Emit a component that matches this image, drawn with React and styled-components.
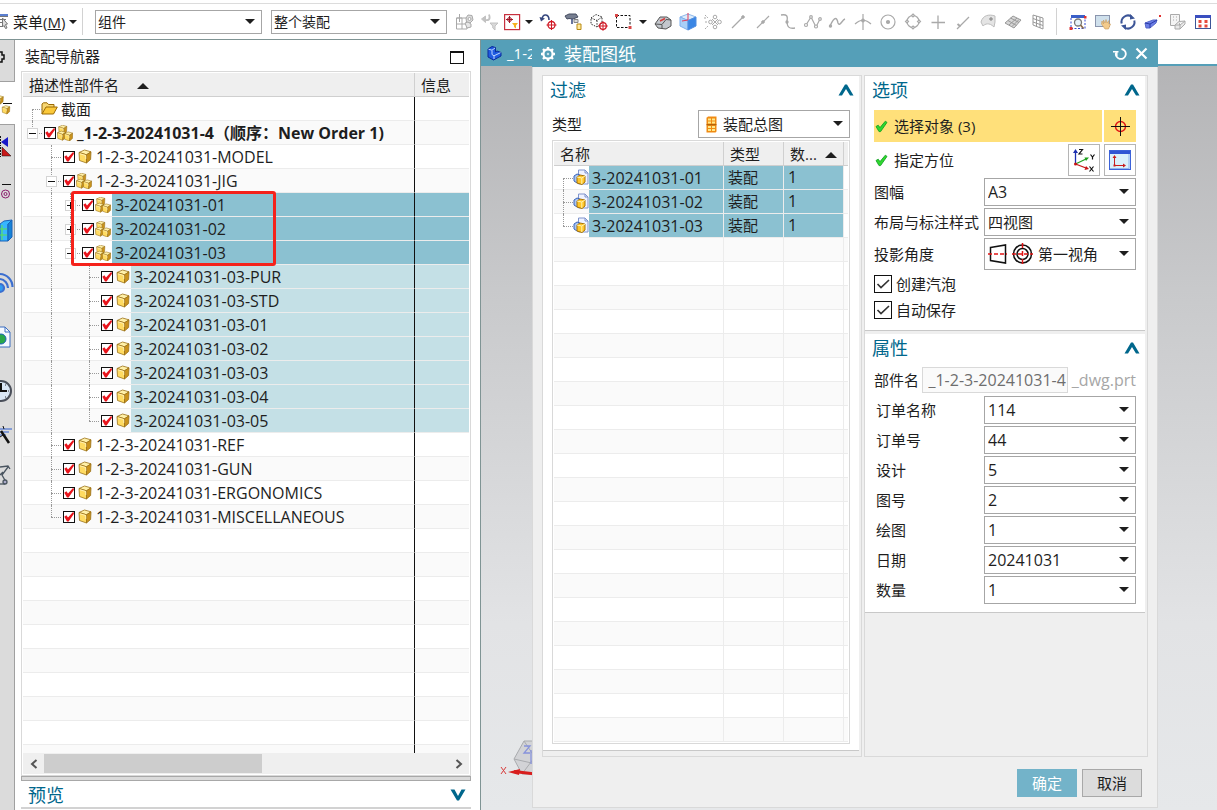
import React from 'react';
import styled, { createGlobalStyle, css } from 'styled-components';

const c = {
  text: '#1e1e1e',
  teal: '#559fb8',
  heading: '#00678c',
  line: '#d9d9d9',
  rule: '#ececec',
  header: '#efefef',
  stripe: '#fafafa',
  field: '#a6a6a6',
  selected: '#8bc1d1',
  child: '#c4e0e6',
};

const Global = createGlobalStyle`
  *, *::before, *::after { box-sizing: border-box; }
  body {
    margin: 0;
    background: #fff;
    color: ${c.text};
    font: 15px/20px "Open Sans", "Noto Sans CJK SC", sans-serif;
  }
  button, input, select { font: inherit; color: inherit; margin: 0; padding: 0; }
  svg { display: block; flex: none; }
  h1, h2, h3 { margin: 0; font-weight: 400; }
`;

/* ---------- shell ---------- */

const Page = styled.div`
  display: flex;
  flex-direction: column;
  height: 100vh;
  min-height: 640px;
  overflow: hidden;
`;

const Toolbar = styled.header`
  display: flex;
  align-items: center;
  flex: none;
  height: 40px;
  padding-top: 4px;
  border-bottom: 1px solid #7f9494;
  background: linear-gradient(#fff 3px, #dcdcdc 3px, #dcdcdc 4px, #fff 4px);
  overflow: hidden;
`;

const Scopes = styled.div`
  display: flex;
  flex: none;
  gap: 9px;
  margin-right: 5px;
`;

const Workspace = styled.div`
  display: flex;
  flex: 1;
  min-height: 0;
`;

const MenuButton = styled.button`
  display: flex;
  align-items: center;
  gap: 4px;
  width: 82px;
  border: 0;
  background: none;
  white-space: nowrap;
  text-align: left;
`;

const Caret = styled.span`
  flex: none;
  width: 0;
  border: 4px solid transparent;
  border-top-color: ${c.text};
  border-bottom: 0;
`;

const Divider = styled.span`
  flex: none;
  width: 1px;
  height: 27px;
  margin: 0 ${(p) => p.$after}px 0 ${(p) => p.$before || 0}px;
  background: #d2d2d2;
`;

const Tool = styled.button`
  display: flex;
  align-items: center;
  justify-content: center;
  flex: none;
  width: ${(p) => p.$w || 25}px;
  height: 26px;
  border: 0;
  background: none;
`;

/* ---------- form parts ---------- */

const Field = styled.span`
  position: relative;
  display: flex;
  align-items: center;
  flex: none;
  gap: ${(p) => p.$gap || 4}px;
  width: ${(p) => p.$w || 152}px;
  height: ${(p) => p.$h || 28}px;
  padding-left: ${(p) => p.$pad || 3}px;
  border: 1px solid ${c.field};
  background: #fff;
  font-size: ${(p) => p.$size || 16}px;
  &::after {
    content: '';
    position: absolute;
    right: 6px;
    top: 50%;
    margin-top: -3px;
    border: 5px solid transparent;
    border-top-color: ${c.text};
    border-bottom: 0;
    pointer-events: none;
  }
`;

const Select = styled.select`
  appearance: none;
  flex: 1;
  min-width: 0;
  height: 100%;
  border: 0;
  background: transparent;
  outline: none;
`;

function Drop({ id, label, value, icon, ...rest }) {
  return (
    <Field {...rest}>
      {icon}
      <Select id={id} aria-label={label} defaultValue={value}>
        <option>{value}</option>
      </Select>
    </Field>
  );
}

const TickBox = styled.span`
  display: grid;
  flex: none;
  width: ${(p) => p.$size}px;
  height: ${(p) => p.$size}px;
  input, svg { grid-area: 1 / 1; }
  svg { pointer-events: none; }
`;

const TickInput = styled.input`
  appearance: none;
  width: 100%;
  height: 100%;
  border: 1px solid #111;
  background: #fff;
  & + svg { visibility: hidden; }
  &:checked + svg { visibility: visible; }
`;

function RedTick(props) {
  return (
    <TickBox $size={12}>
      <TickInput type="checkbox" defaultChecked {...props} />
      <svg width="12" height="12" viewBox="0 0 12 12">
        <path d="M1.3 5.8 L3.4 4.2 L5 6.4 L9.8 1.2 L11 1.6 L10.8 3 L5.6 10.6 L4 10.6 Z" fill="#e8141c" />
      </svg>
    </TickBox>
  );
}

function GreyTick(props) {
  return (
    <TickBox $size={18}>
      <TickInput type="checkbox" defaultChecked {...props} />
      <svg width="18" height="18" viewBox="0 0 18 18" fill="none" stroke="#333" strokeWidth="1.7">
        <path d="M3.5 9 L7 12.5 L15 5" />
      </svg>
    </TickBox>
  );
}

/* ---------- side bar ---------- */

const SideBar = styled.nav`
  display: flex;
  flex-direction: column;
  flex: none;
  width: 15px;
  border-right: 1px solid #a0a0a0;
  background: #dbdbdb;
`;

const SideTab = styled.button`
  display: flex;
  align-items: center;
  flex: none;
  width: ${(p) => (p.$active ? 15 : 14)}px;
  height: ${(p) => p.$h}px;
  border: 0;
  background: ${(p) => (p.$active ? '#fff' : 'none')};
  ${(p) => p.$active && css`
    border-top: 1px solid #a0a0a0;
    border-bottom: 1px solid #a0a0a0;
  `}
  overflow: hidden;
`;

/* ---------- navigator ---------- */

const Navigator = styled.section`
  display: flex;
  flex-direction: column;
  flex: none;
  width: 465px;
  padding: 0 9px 1px 6px;
`;

const NavTitle = styled.div`
  display: flex;
  align-items: center;
  justify-content: space-between;
  flex: none;
  height: 31px;
  padding: 4px 7px 0 4px;
`;

const NavHeading = styled.h2`
  font-size: 15px;
  line-height: 20px;
  padding-bottom: 4px;
`;

const WindowBox = styled.button`
  width: 14px;
  height: 13px;
  border: 1px solid #111;
  border-top-width: 2px;
  background: none;
`;

const Frame = styled.div`
  position: relative;
  display: flex;
  flex-direction: column;
  flex: 1;
  min-height: 0;
  padding: 1px;
  border: 1px solid ${c.line};
`;

const Clip = styled.div`
  flex: 1;
  min-height: 0;
  overflow: hidden;
`;

const Grid = styled.table`
  width: 100%;
  table-layout: fixed;
  border-collapse: separate;
  border-spacing: 0;
`;

const Th = styled.th`
  width: ${(p) => (p.$w ? `${p.$w}px` : 'auto')};
  height: 24px;
  padding: 0 0 0 ${(p) => (p.$spare ? 0 : 6)}px;
  border-right: ${(p) => (p.$last ? 0 : 1)}px solid #d0d0d0;
  border-bottom: 1px solid #cfcfcf;
  background: ${c.header};
  font-weight: 400;
  text-align: left;
  line-height: 22px;
  white-space: nowrap;
`;

const Up = styled.span`
  display: inline-block;
  margin-left: ${(p) => p.$gap}px;
  border: 6px solid transparent;
  border-bottom-color: ${c.text};
  border-top: 0;
  vertical-align: 2px;
`;

const tone = { on: c.selected, child: c.child };

const Tr = styled.tr`
  background: #fff;
  &:nth-child(even) { background: ${c.stripe}; }
`;

const Td = styled.td`
  height: 24px;
  padding: 0;
  border-bottom: 1px solid ${c.rule};
  border-right: ${(p) => (p.$last ? '0' : `1px solid ${p.$rule || c.rule}`)};
  background: ${(p) => tone[p.$tone] || 'transparent'};
  font-size: 16px;
  line-height: 23px;
  white-space: nowrap;
`;

const CellText = styled.span`
  padding-left: 4px;
  font-size: ${(p) => (p.$cjk ? 15 : 16)}px;
`;

const Line = styled.div`
  display: flex;
  align-items: center;
  height: 23px;
`;

const Name = styled.span`
  flex: 1;
  height: 23px;
  padding-left: 3px;
  background: ${(p) => tone[p.$tone] || 'transparent'};
  font-size: ${(p) => (p.$cjk ? 15 : 16)}px;
  font-weight: ${(p) => (p.$bold ? 700 : 400)};
  line-height: 24px;
`;

const Icon = styled.span`
  display: flex;
  justify-content: flex-end;
  flex: none;
  width: ${(p) => p.$w || 18}px;
  padding-right: ${(p) => (p.$w ? 0 : 1)}px;
`;

const Indent = styled.span`
  position: relative;
  flex: none;
  width: 19px;
  height: 24px;
  margin-right: ${(p) => (p.$end ? p.$end : 0)}px;
  &::before {
    content: '';
    display: ${(p) => (p.$kind === 'none' ? 'none' : 'block')};
    position: absolute;
    left: 9px;
    top: ${(p) => (p.$kind === 'start' ? 12 : 0)}px;
    bottom: ${(p) => (p.$kind === 'end' ? 12 : 0)}px;
    border-left: 1px dotted #999;
  }
  &::after {
    content: '';
    display: ${(p) => (p.$arm ? 'block' : 'none')};
    position: absolute;
    left: 9px;
    right: 0;
    top: 12px;
    border-top: 1px dotted #999;
  }
`;

const Expander = styled.button`
  position: absolute;
  z-index: 1;
  left: 4px;
  top: 7px;
  width: 11px;
  height: 11px;
  border: 1px solid #d4d4d4;
  background:
    linear-gradient(#111, #111) center / 7px 1px no-repeat,
    ${(p) => (p.$open ? '' : 'linear-gradient(#111, #111) center / 1px 7px no-repeat,')}
    #fff;
`;

const Callout = styled.div`
  position: absolute;
  z-index: 2;
  left: 49px;
  top: 119px;
  width: 205px;
  height: 75px;
  border: 3px solid #f5221b;
  border-radius: 3px;
  pointer-events: none;
`;

const ScrollBar = styled.div`
  display: flex;
  flex: none;
  height: 21px;
  padding: 1px 0;
  background: ${c.header};
`;

const ScrollArrow = styled.button`
  display: flex;
  align-items: center;
  justify-content: center;
  width: 21px;
  border: 0;
  background: none;
`;

const Track = styled.div`
  flex: 1;
  background: linear-gradient(90deg, #cdcdcd 54%, transparent 54%);
`;

const Splitter = styled.div`
  flex: none;
  height: 5px;
  border: 1px solid #a8a8a8;
  background: #dbdbdb;
`;

const Preview = styled.div`
  display: flex;
  align-items: center;
  justify-content: space-between;
  flex: none;
  height: 28px;
  padding: 2px 5px 0 7px;
  border-bottom: 2px solid #d2d2d2;
`;

const Heading = styled.h3`
  color: ${c.heading};
  font-size: 18px;
  line-height: 24px;
`;

/* ---------- graphics window ---------- */

const Graphics = styled.main`
  position: relative;
  flex: 1;
  min-width: 680px;
  display: flex;
  flex-direction: column;
  border-left: 1px solid #7f9494;
`;

const TabStrip = styled.div`
  flex: none;
  height: 26px;
  border-bottom: 2px solid ${c.teal};
`;

const DocTab = styled.div`
  display: flex;
  align-items: center;
  gap: 5px;
  width: 51px;
  height: 26px;
  padding-left: 6px;
  background: ${c.teal};
  color: #fff;
  font-size: 15px;
  white-space: nowrap;
  overflow: hidden;
`;

const Canvas = styled.div`
  flex: 1;
  display: flex;
  align-items: flex-end;
  padding: 0 0 30px 19px;
  background: linear-gradient(#b4b4b6, #c8c9cb 30%, #e2e3e5 75%, #e6e8ea);
`;

const Dialog = styled.section`
  position: absolute;
  left: 51px;
  top: 0;
  bottom: 2px;
  display: flex;
  flex-direction: column;
  width: 626px;
  border: 1px solid ${c.line};
  border-top: 0;
  background: ${c.header};
`;

const DialogBar = styled.div`
  display: flex;
  align-items: center;
  flex: none;
  height: 27px;
  margin: 0 -1px;
  padding: 0 10px 0 8px;
  gap: 8px;
  background: ${c.teal};
  color: #fff;
`;

const DialogTitle = styled.h2`
  flex: 1;
  font-size: 18px;
  line-height: 26px;
`;

const BarButton = styled.button`
  display: flex;
  border: 0;
  background: none;
  color: #fff;
`;

const Columns = styled.div`
  display: flex;
  flex: 1;
  min-height: 0;
  gap: 2px;
  padding: 8px 9px 0;
`;

const Column = styled.div`
  display: flex;
  flex-direction: column;
  gap: 3px;
  width: ${(p) => (p.$grow ? 'auto' : '284px')};
  flex: ${(p) => (p.$grow ? '1' : 'none')};
  min-height: 0;
  padding-right: 2px;
  padding-bottom: ${(p) => (p.$grow ? 5 : 0)}px;
  border: 1px solid ${c.line};
`;

const Panel = styled.section`
  display: flex;
  flex-direction: column;
  flex: ${(p) => (p.$grow ? '1' : 'none')};
  min-height: 0;
  padding: 1px 9px ${(p) => p.$bottom || 6}px;
  border-bottom: 1px solid #c8c8c8;
  background: #fff;
`;

const PanelHead = styled.div`
  display: flex;
  align-items: center;
  justify-content: space-between;
  flex: none;
  height: 26px;
  margin: 0 -4px ${(p) => p.$gap || 7}px -2px;
`;

const Row = styled.div`
  display: flex;
  align-items: center;
  justify-content: space-between;
  flex: none;
  height: ${(p) => p.$h || 28}px;
  margin-bottom: 2px;
  padding-left: ${(p) => p.$in || 0}px;
  white-space: nowrap;
`;

const Pick = styled.span`
  display: flex;
  align-items: center;
  flex: 1;
  gap: 6px;
  height: 32px;
  padding-left: 1px;
  background: ${(p) => (p.$on ? '#ffe07a' : 'none')};
`;

const SquareButton = styled.button`
  display: flex;
  align-items: center;
  justify-content: center;
  flex: none;
  width: 32px;
  height: 32px;
  margin-left: ${(p) => p.$gap || 4}px;
  border: 1px solid ${(p) => (p.$on ? '#ffe07a' : '#b5b5b5')};
  background: ${(p) => (p.$on ? '#ffe07a' : '#fff')};
`;

const Checks = styled.div`
  display: flex;
  flex-direction: column;
  margin-top: -1px;
  padding-bottom: 1px;
`;

const CheckLabel = styled.label`
  display: flex;
  align-items: center;
  gap: 4px;
  height: 26px;
`;

const NameInput = styled.input`
  width: 146px;
  height: 26px;
  padding: 0 0 0 5px;
  border: 1px solid ${c.line};
  background: #fafafa;
  color: #6e6e6e;
  font-size: 16px;
  outline: none;
`;

const Suffix = styled.span`
  color: #a6a6a6;
  font-size: 16px;
`;

const Footer = styled.footer`
  display: flex;
  justify-content: flex-end;
  flex: none;
  gap: 5px;
  padding: 12px 15px 10px;
`;

const Action = styled.button`
  width: 60px;
  height: 28px;
  border: 1px solid ${(p) => (p.$primary ? '#73b3c9' : '#a8a8a8')};
  background: ${(p) => (p.$primary ? '#73b3c9' : '#dcdcdc')};
  color: ${(p) => (p.$primary ? '#fff' : c.text)};
`;

/* ---------- drawings ---------- */

const Cube = ({ x = 0, y = 0, s = 1 }) => (
  <g transform={`translate(${x} ${y}) scale(${s})`} stroke="#9a7118" strokeWidth="0.8" strokeLinejoin="round">
    <path d="M1 3.5 L6.5 1 L13 2.8 L8.5 5.8 Z" fill="#fff0a8" />
    <path d="M1 3.500 L8.500 5.800 L8.500 14 L1.500 11.500 Z" fill="#ffdb62" />
    <path d="M8.500 5.800 L13 2.800 L12.600 10.500 L8.500 14 Z" fill="#c9921c" />
    <path d="M2 4.800 L7.800 6.500 V10" fill="none" stroke="#fff6c8" />
  </g>
);

const PartIcon = () => (
  <svg width="14" height="15" viewBox="0 0 14 15"><Cube /></svg>
);

const AssemblyIcon = () => (
  <svg width="16" height="16" viewBox="0 0 16 16">
    <Cube x={1} y={-0.5} s={0.68} />
    <Cube x={-0.3} y={5.4} s={0.7} />
    <Cube x={6.6} y={6.2} s={0.7} />
  </svg>
);

const FolderIcon = () => (
  <svg width="17" height="13" viewBox="0 0 17 13" stroke="#9b6a05" strokeLinejoin="round">
    <path d="M1 12 V2 L2.5 0.8 H6 L7.5 2.5 H13 V5" fill="#f7d774" />
    <path d="M1 12 L5 5 H16.3 L12.5 12 Z" fill="#fbc93a" />
  </svg>
);

const DrawingIcon = () => (
  <svg width="16" height="17" viewBox="0 0 16 17" strokeLinejoin="round">
    <path d="M5.5 1 H12 L15 4 V15 H5.5 Z" fill="#eef2ff" stroke="#7f93cc" />
    <path d="M12 1 V4 H15" fill="none" stroke="#7f93cc" />
    <path d="M1 7 L4 5 L7 6 V14 L4 14 L1 12 Z" fill="#a9c5f5" stroke="#3a64b8" />
    <path d="M4 8 L7 6 L12 7 V13 L9 15.5 L4 14 Z" fill="#ffc629" stroke="#a87406" />
    <path d="M4 8 L8.8 9 L12 7 M8.8 9 V15" fill="none" stroke="#fff3b0" />
  </svg>
);

const Chevron = ({ down }) => (
  <svg width="16" height="12" viewBox="0 0 16 12" fill={c.heading}>
    {down
      ? <path d="M0.5 0.5 H4.5 L8 7 L11.5 0.5 H15.5 L9 11.5 H7 Z" />
      : <path d="M0.5 11.5 H4 L8 5 L12 11.5 H15.5 L9 0.5 H7 Z" />}
  </svg>
);

const GreenTick = () => (
  <svg width="13" height="13" viewBox="0 0 13 13">
    <path d="M1 6.5 L3.2 5.2 L5 7.6 L10.3 1.2 L12 2.4 L5.6 11.6 L4 11.6 Z" fill="#2fd82f" stroke="#0a9a1c" strokeWidth="0.8" />
  </svg>
);

const Crosshair = () => (
  <svg width="20" height="20" viewBox="0 0 20 20" fill="none">
    <circle cx="10.5" cy="10.5" r="5" stroke="#e01414" strokeWidth="1.4" />
    <path d="M10.5 1 V20 M1 10.5 H20" stroke="#111" />
  </svg>
);

const CsysIcon = () => (
  <svg width="24" height="24" viewBox="0 0 24 24" fill="none">
    <path d="M3.5 16 V4" stroke="#1c2fb0" strokeWidth="1.3" />
    <path d="M3.5 1 L6 5 H1 Z" fill="#1c2fb0" />
    <path d="M3.5 16 L14 11" stroke="#1ea01e" strokeWidth="1.3" />
    <path d="M17 9.5 L14 13 L12.5 9.5 Z" fill="#1ea01e" />
    <path d="M3.5 16 L14 20" stroke="#c81414" strokeWidth="1.3" />
    <path d="M17 21 L12.5 22 L14 18 Z" fill="#c81414" />
    <circle cx="3.5" cy="16" r="1.5" fill="#c81414" />
    <path d="M7 1.5 H10.5 L7 6 H10.5 M18.5 6.5 L20.5 9 L22.5 6.5 M20.5 9 V11.5 M17.5 18.5 L21.5 23.5 M21.5 18.5 L17.5 23.5" stroke="#111" strokeWidth="1.2" />
  </svg>
);

const PlaneIcon = () => (
  <svg width="22" height="20" viewBox="0 0 22 20" fill="none">
    <rect x="0.5" y="0.5" width="21" height="19" fill="#d9f0fb" stroke="#3b62d9" />
    <rect x="1" y="1" width="20" height="3" fill="#2f55d4" />
    <path d="M20 4 V19 M1 18.5 H20" stroke="#8fb4ee" />
    <path d="M5.5 16 V7 M5 15.5 H15" stroke="#c81e1e" />
    <path d="M5.5 5 L7.5 8 H3.5 Z M17 15.5 L14 17.5 V13.5 Z M4.500 14.500 h2 v2 h-2z" fill="#c81e1e" />
  </svg>
);

const CabinetIcon = () => (
  <svg width="11" height="17" viewBox="0 0 11 17">
    <path d="M1 1.5 L2 0.5 H10.5 V15.5 L9.5 16.5 H0.5 V1.5 Z" fill="#f08a12" />
    <path d="M2 2.5h3v2h-3zM6 2.5h3v2h-3zM2 5.5h3v2h-3zM6 5.5h3v2h-3zM2 10h3v2h-3zM6 10h3v2h-3zM2 13h3v2h-3zM6 13h3v2h-3z" fill="#ffe98a" />
    <path d="M0.5 8.7 H10.5" stroke="#a85b06" />
  </svg>
);

const ProjectionIcon = () => (
  <svg width="46" height="22" viewBox="0 0 46 22" fill="none" stroke="#111" strokeWidth="1.5">
    <path d="M2.5 4.5 L17.5 2 V20 L2.5 17.5 Z" />
    <circle cx="34.5" cy="11" r="9" />
    <circle cx="34.5" cy="11" r="5.5" />
    <path d="M0 11 H19 M24 11 H45" stroke="#e01414" strokeDasharray="4 2" />
    <path d="M34.5 0 V22" stroke="#e01414" strokeDasharray="5 3" />
  </svg>
);

const GearIcon = () => (
  <svg width="16" height="16" viewBox="0 0 16 16" fill="none" stroke="#fff">
    <circle cx="8" cy="8" r="4.6" strokeWidth="2.2" />
    <path d="M8 1 V3.5 M8 12.5 V15 M1 8 H3.5 M12.5 8 H15 M3 3 L4.8 4.8 M11.2 11.2 L13 13 M13 3 L11.2 4.8 M4.8 11.2 L3 13" strokeWidth="2.4" />
    <circle cx="8" cy="8" r="0.8" strokeWidth="0.8" />
  </svg>
);

const ResetIcon = () => (
  <svg width="14" height="14" viewBox="0 0 14 14" fill="none" stroke="#fff" strokeWidth="1.8">
    <path d="M8.5 2 A5 5 0 1 1 3 5.5" />
    <path d="M0 4.8 H5.5 M3.8 4 V9" strokeWidth="1.5" />
  </svg>
);

const CloseIcon = () => (
  <svg width="13" height="13" viewBox="0 0 13 13" stroke="#fff" strokeWidth="2.2">
    <path d="M1.5 1.5 L11.5 11.5 M11.5 1.5 L1.5 11.5" />
  </svg>
);

const BlueCubeIcon = () => (
  <svg width="15" height="16" viewBox="0 0 15 16" stroke="#0a2a9a" strokeLinejoin="round">
    <path d="M1 4 L5 1.5 L8.5 2.5 V7 L10 6 L14 7.5 V11 L6.5 15 L1 12 Z" fill="#1f5be0" />
    <path d="M1.5 4.2 L5 5.2 L8 3 M5 5.5 V9.5 L7 10.8 L13.5 7.7 M7 11 V14" fill="none" stroke="#bcd6ff" />
  </svg>
);

const TriadIcon = () => (
  <svg width="44" height="42" viewBox="0 0 44 42" fill="none" stroke="#a9abae">
    <path d="M24 3 L14 21 L22 36 L36 36 V3 Z M14 21 L36 26 M24 3 L36 21 M22 36 L34 20" fill="#d2d3d6" />
    <path d="M24 8 H30 L24 15 H30 M31 12 V26" stroke="#8793dc" strokeWidth="1.3" />
    <path d="M14 33.5 L44 37" stroke="#d81e1e" strokeWidth="3" />
    <path d="M8 34 L20 31 L19 37 Z" fill="#d81e1e" stroke="none" />
    <path d="M1 29 L6 36 M6 29 L1 36" stroke="#d83a3a" />
  </svg>
);

const MenuIcon = () => (
  <svg width="9" height="18" viewBox="0 0 9 18" fill="none" stroke="#777">
    <path d="M0 3.5 H8 M0 6.5 H6 M0 9.5 H2 M0 13.5 H2" />
    <path d="M0 2 H8" stroke="#5b7fd0" strokeWidth="2" />
    <path d="M2.5 5 L7.5 11 L5.5 11.5 L7 15 L5.5 15.5 L4 12.5 L2.5 14 Z" fill="#ddd" />
  </svg>
);

const G = '#a9a9a9';
const target = (x, y, r = 4) => (
  <g stroke="#d01824" fill="none">
    <circle cx={x} cy={y} r={r} strokeWidth="1.3" />
    <path d={`M${x - r - 1.5} ${y} H${x + r + 1.5} M${x} ${y - r - 1.5} V${y + r + 1.5}`} />
  </g>
);

const glyphs = {
  product: <g stroke={G}><path d="M1.5 6 H7 V17 H1.5 Z M1.5 12 H12 V17 H7 M4.5 2 V10 M1.5 6 H12" /><path d="M11 6 L13 3 L17 3.5 L18 8 L15 11 L11.5 10 Z" fill="#ddd" /><circle cx="14.5" cy="7" r="1.5" fill="#fff" /><path d="M10 11 L13 10 L16 12 V15 L12 16 Z" fill="#e6e6e6" /></g>,
  filterOff: <g stroke="#c2c2c2" fill="none"><path d="M9 2.5 C11 8 8 8.500 5 8" strokeWidth="1.800" /><path d="M1.500 7 L5.500 4 V10.500 Z" fill="#c2c2c2" /><path d="M10 11 H18 L15 14 V18 L12.800 16 V14 Z" fill="#d9d9d9" /></g>,
  filter: <g><rect x="2.6" y="2.6" width="15" height="15" stroke="#c7313f" strokeWidth="1.2" /><g stroke="#a01828"><circle cx="7.5" cy="7.5" r="2" /><path d="M4 7.5 H11 M7.5 4 V11" /></g><path d="M10 11 H16 L14 13.5 V16.5 L12 15 V13.5 Z" fill="#f5b21e" /></g>,
  undoPoint: <g><path d="M3 7 C4 1 10 2 10 8" stroke="#36477e" strokeWidth="1.6" /><path d="M0.5 5 L6 6.5 L2 9.5 Z" fill="#36477e" />{target(12.5, 13, 3.5)}</g>,
  brush: <g><path d="M1 4 L5 2 H12 L14 5 L9 7 L5 6.5 L3 7 Z" fill="#777f91" stroke="#454c60" /><path d="M8 7 V12" stroke="#36477e" strokeWidth="1.5" /><path d="M10 7.5 h4 v3 h-4z" fill="#d8d8d8" stroke="#888" /><path d="M13 12 h4 v5.500 h-4z" fill="#ffe9a0" stroke="#b98a10" /></g>,
  cubePoint: <g><path d="M2 6 L7 2.5 L13 5 V11 L8 15 L2 12 Z M2 6 L8 8.5 L13 5 M8 8.5 V15" stroke="#333" strokeDasharray="1.5 1.2" />{target(14, 14, 3.3)}</g>,
  marquee: <g><rect x="2.5" y="3.5" width="13.5" height="12" stroke="#111" strokeDasharray="2.5 1.5" /><path d="M1 2h3v3h-3zM14.5 14h3v3h-3z" fill="#d84646" /></g>,
  solid: <g stroke="#555" strokeLinejoin="round"><path d="M2 12 L7 5 H14 L18 8 V14 L13 17 L5 16 Z" fill="#c3c7cd" /><path d="M2 12 L9 12.5 L13 7.5 L18 8 M9 13 V16.5" /><path d="M7 9 L12 6.5" stroke="#d83a3a" strokeWidth="1.5" /></g>,
  cube: <g strokeLinejoin="round"><path d="M2 5 L10 2 L18 5 L10 8.5 Z" fill="#dcecfb" stroke="#8fb8ea" /><path d="M2 5 L10 8.5 V18 L2 14 Z" fill="#a9cff7" stroke="#7fb0ee" /><path d="M18 5 L10 8.5 V18 L18 14 Z" fill="#3a86e4" stroke="#4f8de0" /><path d="M10 1 V8 L4 9" stroke="#e03c5a" /></g>,
  snap: <g stroke={G}><path d="M2 3 L5 6 M2 17 L5 14 M2 7 V5 M2 10 H5" strokeDasharray="2 1" /><circle cx="12" cy="5" r="1.8" /><circle cx="12" cy="15" r="1.8" /><circle cx="7.5" cy="10" r="1.8" /><circle cx="16.5" cy="10" r="1.8" /><path d="M9 7 L15 13 M15 7 L9 13" /></g>,
  line: <g stroke={G}><path d="M4 16 L15 5" strokeWidth="1.2" /><circle cx="15" cy="5" r="1.3" fill={G} /></g>,
  mid: <g stroke={G}><path d="M4 16 L16 4" strokeWidth="1.2" /><circle cx="10" cy="10" r="1.3" fill={G} /></g>,
  curve: <g stroke={G} strokeWidth="1.3"><path d="M3 3 C9 2 10 4 9 9 C9 15 11 17 17 16" /><circle cx="9" cy="10" r="1" fill={G} /></g>,
  poly: <g stroke={G} strokeWidth="1.2"><path d="M3 13 L8 5 L13 15 L17 7" /><circle cx="8" cy="5" r="1.3" fill="#fff" /><circle cx="13" cy="14.5" r="1.5" fill="#fff" /><circle cx="17" cy="7" r="1.3" fill="#fff" /><circle cx="3" cy="13" r="1.5" fill="#fff" /></g>,
  wave: <g stroke={G} strokeWidth="1.4"><path d="M2 14 C7 3 9 6 10 11 C12 15 14 8 17 7" /><circle cx="2.5" cy="14" r="1" fill={G} /></g>,
  cross: <g stroke={G} strokeWidth="1.2"><path d="M10 2 V18 M2 12 C7 7 13 7 18 12" /><circle cx="10" cy="8.5" r="1.3" fill={G} /></g>,
  centre: <g stroke={G} strokeWidth="1.2"><circle cx="10" cy="10" r="7" /><circle cx="10" cy="10" r="1.5" fill={G} /></g>,
  quad: <g stroke={G} strokeWidth="1.2"><circle cx="10" cy="9.5" r="6" /><path d="M10 2 l1.5 1.5 -1.5 1.5 -1.5 -1.5z M10 14 l1.5 1.5 -1.5 1.5 -1.5 -1.5z M4 8 l1.5 1.5 -1.5 1.5 -1.5 -1.5z M16 8 l1.5 1.5 -1.5 1.5 -1.5 -1.5z" fill="#fff" /></g>,
  plus: <path d="M10 3.5 V17 M3.5 10.5 H17" stroke={G} strokeWidth="1.3" />,
  tangent: <g stroke={G}><path d="M4 17 L16 5" strokeWidth="1.2" /><path d="M4.5 12 L7.5 14.5" strokeWidth="2" /></g>,
  face: <g stroke="#bdbdbd"><path d="M3 10 C5 3 11 2 17 4 V10 L16 15 C11 10 7 12 5 14 Z" fill="#e4e4e4" /><circle cx="13" cy="7" r="1.3" fill="#999" stroke="#999" /></g>,
  mesh: <g stroke="#999"><path d="M2 11 L10 4 L18 8 L11 16 Z" fill="#d6d6d6" /><path d="M5 8.5 L13.5 13.5 M7.5 6 L16 10.5 M6 13 L14 6 M9 14.5 L16 7.5" /></g>,
  grid: <path d="M5 3 L15 6 V17 L5 13 Z M5 6.5 L15 10 M5 10 L15 13.5 M8.5 4 V14.5 M12 5 V16" stroke="#999" />,
  zoomWin: <g><path d="M3 6 V16.5 H17 V6" stroke="#3348d0" strokeDasharray="2 1.5" /><rect x="3" y="3" width="14" height="3" fill="#3a5fc8" /><circle cx="10" cy="10.5" r="3.5" stroke="#777" strokeWidth="1.3" fill="#e8f3fa" /><path d="M12.5 13 L15.5 16.5" stroke="#8a6a4a" strokeWidth="1.8" /><path d="M1.5 15h3v3h-3zM16 4h2.5v2.5h-2.5z" fill="#e03030" /></g>,
  pan: <g><rect x="2.5" y="3.5" width="14" height="11" fill="#cfe0ec" stroke="#8a95ad" /><path d="M9 9 L10.5 12 L10.5 8 L12 11 L13 7.5 L14 11 L16 8.5 L15.8 12 L17.5 12 L15.5 17 L12 17 L8.5 12 Z" fill="#f3cb8c" stroke="#c99a5a" strokeWidth="0.6" /></g>,
  rotate: <g stroke="#3c5597" strokeWidth="2"><path d="M3.7 11.5 A6.5 6.5 0 0 1 13.5 4.5 M16.3 8.5 A6.5 6.5 0 0 1 6.5 15.5" /><path d="M12 2 L17 6.5 L12 7.5 Z M8 18 L3 13.5 L8 12.5 Z" fill="#3c5597" stroke="none" /></g>,
  probe: <g stroke="#5566c8" strokeLinejoin="round"><path d="M2 11 L10 8 H14 L13 11 L7 16 H3 Z" fill="#6b7ee6" /><path d="M2 11 L7 12 L14 8 M7 12 V16" stroke="#2b3ba8" /><path d="M16 3 h2 v2 h-2z" fill="#e03030" stroke="none" /></g>,
  sheet: <g stroke="#aaa"><path d="M2.5 2.5 H11.5 V13.5 H2.5 Z" fill="#f4f4f4" /><path d="M5 5 H6 M8 5 H9 M5 8 H6 M8 8 H9" /><path d="M7 13 L11 9.5 L17 9 V12 L12 17 H7 Z M7 13 H12 L17 9 M12 13 V17" fill="#e9e9e9" /></g>,
  tiles: <g><rect x="2.5" y="3.5" width="15" height="13" stroke="#3c5597" fill="#fff" /><rect x="2" y="3" width="16" height="3" fill="#3a4fc0" /><path d="M5.5 8h3v3h-3zM11.5 8h3v3h-3zM5.5 12.500h3v3h-3zM11.5 12.500h3v3h-3z" fill="#e64a3c" /></g>,
};

const Glyph = ({ name }) => (
  <svg width="20" height="20" viewBox="0 0 20 20" fill="none">{glyphs[name]}</svg>
);

const sideTabs = [
  { name: '设置', h: 41, art: <path d="M0 3 H2 V6 H4 V10 H2 V13 H0" stroke="#111" strokeWidth="1.5" fill="none" /> },
  { name: '装配导航器', h: 44, active: true, art: <g><Cube x={-5} y={4} s={0.64} /><Cube x={1.5} y={14} s={0.64} /><path d="M3 12.5 H12" stroke="#111" /></g> },
  { name: '约束导航器', h: 44, art: <g><path d="M8 2 V12 L1 7 Z" fill="#1818c8" /><path d="M2 12 L11 21 H2 Z" fill="#c81818" stroke="#111" strokeWidth="0.5" /><path d="M0 1 V11 M0 12 V22" stroke="#111" strokeDasharray="2 1" strokeWidth="2" /></g> },
  { name: '部件导航器', h: 40, art: <g fill="none"><path d="M2 7.5 H11" stroke="#111" /><circle cx="5.5" cy="17" r="4" stroke="#8a1a6a" /><circle cx="5.5" cy="17" r="1.5" stroke="#8a1a6a" /></g> },
  { name: '重用库', h: 44, art: <g stroke="#1b62b8"><path d="M0 5 L4 2 L12 1 L8 5 V22 L0 22 Z" fill="#37b6ff" /><path d="M8 5 L12 1 V18 L8 22 Z" fill="#1683d8" /><path d="M2 6 V21 M0 10 H7 M0 16 H7" stroke="#5ee04a" /></g> },
  { name: '浏览器', h: 60, art: <g fill="none" stroke="#3c6fd0" strokeWidth="2.2"><circle cx="0" cy="17" r="4" fill="#2f9bf0" /><path d="M0 8 A9 9 0 0 1 8 17 M0 3 A13 13 0 0 1 12.5 16" /></g> },
  { name: '网页', h: 48, art: <g><path d="M-3 2 H5 L10 7 V22 H-3 Z" fill="#f5f9ff" stroke="#3c6ec0" /><path d="M5 2 V7 H10" fill="none" stroke="#3c6ec0" /><circle cx="1" cy="14" r="5" fill="#2aa84a" stroke="#1b62b8" /></g> },
  { name: '历史记录', h: 60, art: <g><circle cx="1" cy="12" r="10" fill="#d9e6f5" stroke="#4a4f5a" strokeWidth="2" /><path d="M1 4 V12 H7" fill="none" stroke="#111" strokeWidth="2" /><path d="M8 12h1M5 18h1M5 6h1" stroke="#333" /></g> },
  { name: '工具', h: 28, art: <g fill="none"><path d="M0 6 H12 M0 9 H9 M0 12 H6" stroke="#2f5fd0" /><path d="M1 8 L9 20" stroke="#111" strokeWidth="2.5" /><path d="M3 3 L4 6 M0 14 L3 12" stroke="#111" /></g> },
  { name: '机器人', h: 52, art: <g fill="none" stroke="#4a5560" strokeWidth="1.3"><path d="M0 4 L8 3 L10 6 M8 4 L2 12 L6 19 M0 12 L3 9" /><circle cx="5" cy="19" r="2" fill="#a9a9c9" /><path d="M0 21 H5" /></g> },
];

const toolsA = ['product', 'filterOff', 'filter*', 'undoPoint', 'brush', 'cubePoint', 'marquee*', 'solid', 'cube', 'snap', 'line', 'mid', 'curve', 'poly', 'wave', 'cross', 'centre', 'quad', 'plus', 'tangent', 'face', 'mesh', 'grid'];
const toolsB = ['zoomWin', 'pan', 'rotate', 'probe', 'sheet', 'tiles'];

/* ---------- data ---------- */

const leaf = (text, last) => ({ text, guides: ['none', last ? 'end' : 'mid'] });
const sub = (n, last) => ({ text: `3-20241031-03-${n}`, guides: ['none', 'mid', 'none', last ? 'end' : 'mid'], tone: 'child' });

const tree = [
  { text: '截面', folder: true, guides: ['start'] },
  { text: '_1-2-3-20241031-4（顺序：New Order 1)', bold: true, asm: true, guides: ['end'], box: 'open' },
  leaf('1-2-3-20241031-MODEL'),
  { text: '1-2-3-20241031-JIG', asm: true, guides: ['none', 'mid'], box: 'open' },
  { text: '3-20241031-01', asm: true, guides: ['none', 'mid', 'mid'], box: 'closed', tone: 'on' },
  { text: '3-20241031-02', asm: true, guides: ['none', 'mid', 'mid'], box: 'closed', tone: 'on' },
  { text: '3-20241031-03', asm: true, guides: ['none', 'mid', 'end'], box: 'open', tone: 'on' },
  sub('PUR'), sub('STD'), sub('01'), sub('02'), sub('03'), sub('04'), sub('05', true),
  leaf('1-2-3-20241031-REF'),
  leaf('1-2-3-20241031-GUN'),
  leaf('1-2-3-20241031-ERGONOMICS'),
  leaf('1-2-3-20241031-MISCELLANEOUS', true),
];

const drawings = ['3-20241031-01', '3-20241031-02', '3-20241031-03'];

const attributes = [
  ['订单名称', '114'], ['订单号', '44'], ['设计', '5'], ['图号', '2'],
  ['绘图', '1'], ['日期', '20241031'], ['数量', '1'],
];

const blanks = (n) => Array.from({ length: n }, (_, i) => i);

/* ---------- sections ---------- */

function TopBar() {
  const tool = (entry) => {
    const more = entry.endsWith('*');
    const name = entry.replace('*', '');
    return (
      <React.Fragment key={name}>
        <Tool $w={name === 'filter' ? 20 : 25} aria-label={name}><Glyph name={name} /></Tool>
        {more && <Tool $w={14} aria-label={`${name} menu`}><Caret /></Tool>}
      </React.Fragment>
    );
  };
  return (
    <Toolbar>
      <MenuButton><MenuIcon /><span>菜单(<u>M</u>)</span><Caret /></MenuButton>
      <Divider $after={12} />
      <Scopes>
        <Drop label="选择类型" value="组件" $w={167} $h={24} $pad={2} $size={14} />
        <Drop label="选择范围" value="整个装配" $w={176} $h={24} $pad={2} $size={14} />
      </Scopes>
      {toolsA.map(tool)}
      <Divider $before={6} $after={8} />
      {toolsB.map(tool)}
    </Toolbar>
  );
}

function TreeRow({ row }) {
  const last = row.guides.length - 1;
  return (
    <Tr>
      <Td $rule="#111">
        <Line>
          {row.guides.map((kind, i) => (
            <Indent key={i} $kind={kind} $arm={i === last} $end={i === last && !row.folder ? 2 : 0}>
              {i === last && row.box && <Expander $open={row.box === 'open'} aria-label={`展开 ${row.text}`} />}
            </Indent>
          ))}
          {row.folder
            ? <Icon $w={16}><FolderIcon /></Icon>
            : <><RedTick aria-label={row.text} /><Icon>{row.asm ? <AssemblyIcon /> : <PartIcon />}</Icon></>}
          <Name $tone={row.tone} $bold={row.bold} $cjk={row.folder}>{row.text}</Name>
        </Line>
      </Td>
      <Td $last $tone={row.tone} />
    </Tr>
  );
}

function AssemblyNavigator() {
  return (
    <Navigator>
      <NavTitle><NavHeading>装配导航器</NavHeading><WindowBox aria-label="最大化" /></NavTitle>
      <Frame>
        <Clip>
          <Grid>
            <thead>
              <tr><Th>描述性部件名<Up $gap={18} /></Th><Th $w={54} $last>信息</Th></tr>
            </thead>
            <tbody>
              {tree.map((row) => <TreeRow key={row.text} row={row} />)}
              {blanks(20).map((i) => <Tr key={i}><Td $rule="#111" /><Td $last /></Tr>)}
            </tbody>
          </Grid>
        </Clip>
        <Callout />
        <ScrollBar>
          <ScrollArrow aria-label="向左滚动">
            <svg width="8" height="10" viewBox="0 0 8 10" fill="none" stroke="#555" strokeWidth="2"><path d="M6.5 1 L2 5 L6.5 9" /></svg>
          </ScrollArrow>
          <Track />
          <ScrollArrow aria-label="向右滚动">
            <svg width="8" height="10" viewBox="0 0 8 10" fill="none" stroke="#555" strokeWidth="2"><path d="M1.5 1 L6 5 L1.5 9" /></svg>
          </ScrollArrow>
        </ScrollBar>
      </Frame>
      <Splitter />
      <Preview><Heading>预览</Heading><Chevron down /></Preview>
    </Navigator>
  );
}

function FilterPanel() {
  return (
    <Panel $grow>
      <PanelHead><Heading>过滤</Heading><Chevron /></PanelHead>
      <Row>
        <label htmlFor="filter-type">类型</label>
        <Drop id="filter-type" value="装配总图" icon={<CabinetIcon />} $size={15} $pad={7} $gap={6} />
      </Row>
      <Frame>
        <Clip>
          <Grid>
            <thead>
              <tr>
                <Th>名称</Th><Th $w={60}>类型</Th><Th $w={60}>数...<Up $gap={8} /></Th><Th $w={4} $last $spare />
              </tr>
            </thead>
            <tbody>
              {drawings.map((name, i) => (
                <Tr key={name}>
                  <Td>
                    <Line>
                      <Indent $kind={i === 0 ? 'start' : i === 2 ? 'end' : 'mid'} $arm />
                      <Icon $w={16}><DrawingIcon /></Icon>
                      <Name $tone="on">{name}</Name>
                    </Line>
                  </Td>
                  <Td $tone="on"><CellText $cjk>装配</CellText></Td>
                  <Td $tone="on"><CellText>1</CellText></Td>
                  <Td $last />
                </Tr>
              ))}
              {blanks(30).map((i) => <Tr key={i}><Td /><Td /><Td /><Td $last /></Tr>)}
            </tbody>
          </Grid>
        </Clip>
      </Frame>
    </Panel>
  );
}

function OptionsPanel() {
  return (
    <Panel>
      <PanelHead><Heading>选项</Heading><Chevron /></PanelHead>
      <Row $h={32}>
        <Pick $on><GreenTick />选择对象 (3)</Pick>
        <SquareButton $on $gap={2} aria-label="选择对象"><Crosshair /></SquareButton>
      </Row>
      <Row $h={32}>
        <Pick><GreenTick />指定方位</Pick>
        <SquareButton aria-label="坐标系"><CsysIcon /></SquareButton>
        <SquareButton aria-label="平面"><PlaneIcon /></SquareButton>
      </Row>
      <Row><label htmlFor="size">图幅</label><Drop id="size" value="A3" /></Row>
      <Row><label htmlFor="layout">布局与标注样式</label><Drop id="layout" value="四视图" $size={15} /></Row>
      <Row $h={32}>
        <label htmlFor="angle">投影角度</label>
        <Drop id="angle" value="第一视角" icon={<ProjectionIcon />} $h={32} $size={15} />
      </Row>
      <Checks>
        <CheckLabel><GreyTick />创建汽泡</CheckLabel>
        <CheckLabel><GreyTick />自动保存</CheckLabel>
      </Checks>
    </Panel>
  );
}

function AttributesPanel() {
  return (
    <Panel>
      <PanelHead $gap={5}><Heading>属性</Heading><Chevron /></PanelHead>
      <Row>
        <label htmlFor="part">部件名</label>
        <NameInput id="part" readOnly value="_1-2-3-20241031-4" />
        <Suffix>_dwg.prt</Suffix>
      </Row>
      {attributes.map(([label, value]) => (
        <Row key={label} $in={2}>
          <label htmlFor={label}>{label}</label>
          <Drop id={label} value={value} />
        </Row>
      ))}
    </Panel>
  );
}

export default function App() {
  return (
    <Page>
      <Global />
      <TopBar />
      <Workspace>
        <SideBar>
          {sideTabs.map((t) => (
            <SideTab key={t.name} $h={t.h} $active={t.active} aria-label={t.name}>
              <svg width="14" height="24" viewBox="0 0 14 24">{t.art}</svg>
            </SideTab>
          ))}
        </SideBar>
        <AssemblyNavigator />
        <Graphics>
          <TabStrip><DocTab><BlueCubeIcon />_1-2</DocTab></TabStrip>
          <Canvas><TriadIcon /></Canvas>
          <Dialog role="dialog" aria-label="装配图纸">
            <DialogBar>
              <GearIcon />
              <DialogTitle>装配图纸</DialogTitle>
              <BarButton aria-label="重置"><ResetIcon /></BarButton>
              <BarButton aria-label="关闭"><CloseIcon /></BarButton>
            </DialogBar>
            <Columns>
              <Column $grow><FilterPanel /></Column>
              <Column><OptionsPanel /><AttributesPanel /></Column>
            </Columns>
            <Footer>
              <Action $primary>确定</Action>
              <Action>取消</Action>
            </Footer>
          </Dialog>
        </Graphics>
      </Workspace>
    </Page>
  );
}
